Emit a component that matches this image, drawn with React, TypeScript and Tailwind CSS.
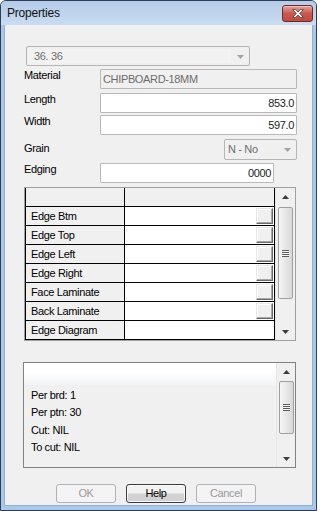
import React from "react";

const FONT = { fontFamily: '"Liberation Sans", Arial, sans-serif' };

function Arrow({ up }: { up?: boolean }) {
  return (
    <svg width="7" height="4" viewBox="0 0 7 4">
      {up ? (
        <polygon points="0,4 7,4 3.5,0" fill="#3c3c3c" />
      ) : (
        <polygon points="0,0 7,0 3.5,4" fill="#3c3c3c" />
      )}
    </svg>
  );
}

function ComboArrow() {
  return (
    <svg width="7" height="4" viewBox="0 0 7 4">
      <polygon points="0,0 7,0 3.5,4" fill="#a3a3a3" />
    </svg>
  );
}

function Scrollbar({ thumbTop, thumbH }: { thumbTop: number; thumbH: number }) {
  return (
    <div className="flex h-full w-[19px] flex-col bg-[#f0f0f0] border-l border-[#e6e6e6]">
      <div className="flex h-[17px] items-center justify-center">
        <Arrow up />
      </div>
      <div className="flex-1">
        <div
          className="mx-auto flex w-[15px] items-center justify-center rounded-[2px] border border-[#a0a0a0] bg-gradient-to-r from-[#f6f6f6] to-[#d8d8d8]"
          style={{ marginTop: thumbTop, height: thumbH }}
        >
          <div className="flex flex-col">
            <div className="h-px w-[7px] bg-[#5e5e5e]" />
            <div className="h-px w-[7px] bg-[#f6f6f6]" />
            <div className="h-px w-[7px] bg-[#5e5e5e]" />
            <div className="h-px w-[7px] bg-[#f6f6f6]" />
            <div className="h-px w-[7px] bg-[#5e5e5e]" />
            <div className="h-px w-[7px] bg-[#f6f6f6]" />
            <div className="h-px w-[7px] bg-[#5e5e5e]" />
          </div>
        </div>
      </div>
      <div className="flex h-[17px] items-center justify-center">
        <Arrow />
      </div>
    </div>
  );
}

function CellButton() {
  return (
    <div className="h-[16px] w-[17px] border-t border-l border-[#e8e8e8] border-r border-b border-r-[#6a6a6a] border-b-[#6a6a6a] bg-[#f0f0f0] shadow-[inset_-1px_-1px_0_#a8a8a8,inset_1px_1px_0_#ffffff]" />
  );
}

const rows = [
  { label: "Edge Btm", btn: true },
  { label: "Edge Top", btn: true },
  { label: "Edge Left", btn: true },
  { label: "Edge Right", btn: true },
  { label: "Face Laminate", btn: true },
  { label: "Back Laminate", btn: true },
  { label: "Edge Diagram", btn: false },
];

export default function App() {
  return (
    <div
      className="flex h-[511px] w-[317px] flex-col overflow-hidden rounded-t-[6px] border border-[#2f3e52] bg-[#a9c8ea] text-[11px] tracking-[-0.35px] text-black"
      style={FONT}
    >
      {/* Title bar */}
      <div className="flex h-[24px] shrink-0 items-start justify-between bg-gradient-to-b from-[#b4cce9] to-[#c9dcf1] pr-[3px]">
        <div className="pl-[6px] pt-[5px] text-[12px] leading-[15px] tracking-[-0.2px] text-[#111]">Properties</div>
        <div className="mt-[4px] flex h-[17px] w-[31px] items-center justify-center rounded-[3px] border border-[#6b2a26] bg-gradient-to-b from-[#e3a39c] via-[#c9594f] to-[#c24a3f] shadow-[inset_0_1px_0_#f0c4bf]">
          <svg width="12" height="9" viewBox="0 0 12 9">
            <polygon
              points="0.5,0.5 3.5,0.5 6,3 8.5,0.5 11.5,0.5 7.6,4.5 11.5,8.5 8.5,8.5 6,6 3.5,8.5 0.5,8.5 4.4,4.5"
              fill="#ffffff"
              stroke="#5a3a3a"
              strokeWidth="0.8"
            />
          </svg>
        </div>
      </div>

      {/* Body frame */}
      <div className="flex flex-1 flex-col px-[3px] pb-[4px]">
        <div className="flex flex-1 flex-col bg-[#f0f0f0] border-l border-r border-b border-[#8fb0d8]">
          {/* Combo 36. 36 */}
          <div className="ml-[21px] mt-[21px] flex h-[20px] w-[224px] items-center rounded-[2px] border border-[#b5b5b5] bg-[#f0f0f0]">
            <div className="ml-[2px] flex h-[14px] w-[202px] items-center bg-[#f3f3f3] pl-[5px] text-[#6d6d6d]">36. 36</div>
            <div className="flex flex-1 items-center justify-center pt-px">
              <ComboArrow />
            </div>
          </div>

          {/* Material */}
          <div className="mt-[3px] flex h-[20px] items-start">
            <div className="w-[95px] pl-[19px] leading-[13px]">Material</div>
            <div className="flex h-[20px] w-[197px] items-center rounded-[1px] border border-[#b9b9b9] bg-[#f0f0f0] pl-[2px] text-[#6d6d6d]">
              CHIPBOARD-18MM
            </div>
          </div>

          {/* Length */}
          <div className="mt-[4px] flex h-[20px] items-start">
            <div className="w-[95px] pl-[19px] leading-[13px]">Length</div>
            <div className="flex h-[20px] w-[197px] items-center justify-end rounded-[1px] border border-[#b9b9b9] bg-white pr-[2px] text-[#222]">
              853.0
            </div>
          </div>

          {/* Width */}
          <div className="mt-[2px] flex h-[20px] items-start">
            <div className="w-[95px] pl-[19px] leading-[13px]">Width</div>
            <div className="flex h-[20px] w-[197px] items-center justify-end rounded-[1px] border border-[#b9b9b9] bg-white pr-[2px] text-[#222]">
              597.0
            </div>
          </div>

          {/* Grain */}
          <div className="mt-[4px] flex h-[21px] items-start">
            <div className="w-[219px] pl-[19px] pt-[3px] leading-[13px]">Grain</div>
            <div className="flex h-[21px] w-[73px] items-center rounded-[2px] border border-[#b5b5b5] bg-[#f0f0f0]">
              <div className="flex-1 pl-[3px] text-[#6d6d6d]">N - No</div>
              <div className="flex w-[17px] items-center justify-center pt-px">
                <ComboArrow />
              </div>
            </div>
          </div>

          {/* Edging */}
          <div className="mt-[3px] flex h-[20px] items-start">
            <div className="w-[95px] pl-[19px] leading-[13px]">Edging</div>
            <div className="flex h-[20px] w-[174px] items-center justify-end rounded-[1px] border border-[#b9b9b9] bg-white pr-[2px] text-[#222]">
              0000
            </div>
          </div>

          {/* Grid */}
          <div className="ml-[19px] mt-[4px] flex h-[154px] w-[272px] border border-[#a0a0a0] bg-[#f0f0f0]">
            <div className="flex w-[250px] flex-col border-l border-r border-black">
              <div className="flex h-[19px] border-b border-black">
                <div className="w-[99px] border-r border-black bg-[#f0f0f0]" />
                <div className="flex-1 bg-[#f0f0f0]" />
              </div>
              {rows.map((r) => (
                <div key={r.label} className="flex h-[19px] border-b border-black">
                  <div className="flex w-[99px] items-center border-r border-black bg-[#f0f0f0] pl-[5px] leading-[13px]">
                    {r.label}
                  </div>
                  <div className="flex flex-1 items-center justify-end bg-white pr-[1px]">
                    {r.btn ? <CellButton /> : null}
                  </div>
                </div>
              ))}
            </div>
            <div className="flex-1">
              <Scrollbar thumbTop={2} thumbH={92} />
            </div>
          </div>

          {/* Lower info box */}
          <div className="ml-[18px] mt-[21px] flex h-[106px] w-[273px] border border-[#828282] bg-[#f0f0f0]">
            <div className="flex w-[253px] flex-col">
              <div className="h-[22px] bg-gradient-to-b from-white from-40% to-[#f1f3f6]" />
              <div className="pl-[7px] pt-[2px] leading-[17.3px]">
                <div>Per brd: 1</div>
                <div>Per ptn: 30</div>
                <div>Cut: NIL</div>
                <div>To cut: NIL</div>
              </div>
            </div>
            <div className="flex-1">
              <Scrollbar thumbTop={1} thumbH={53} />
            </div>
          </div>

          {/* Buttons */}
          <div className="ml-[51px] mt-[16px] flex gap-[10px]">
            <div className="flex h-[19px] w-[60px] items-center justify-center rounded-[3px] border border-[#adb2b5] bg-[#f4f4f4] text-[#9a9a9a]">
              OK
            </div>
            <div className="flex h-[19px] w-[60px] items-center justify-center rounded-[3px] border border-[#3c3c3c] bg-gradient-to-b from-[#f2f2f2] from-45% to-[#d2d2d2] to-55% shadow-[inset_0_0_0_1px_#fafafa]">
              Help
            </div>
            <div className="flex h-[19px] w-[60px] items-center justify-center rounded-[3px] border border-[#adb2b5] bg-[#f4f4f4] text-[#9a9a9a]">
              Cancel
            </div>
          </div>
        </div>
      </div>
    </div>
  );
}
